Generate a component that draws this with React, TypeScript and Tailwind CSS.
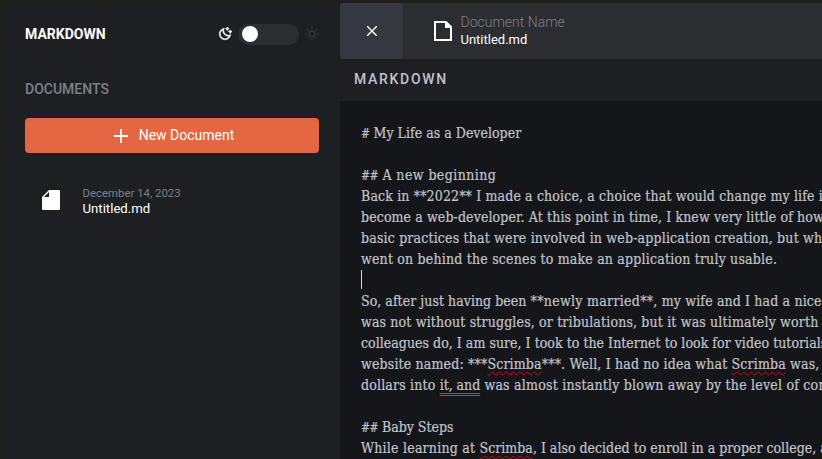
import type { ReactNode } from "react";
import { RiMoonClearLine } from "react-icons/ri";
import { FiSun } from "react-icons/fi";

function Typo({ children }: { children: string }) {
  return (
    <span className="underline decoration-[#c80f0f] decoration-wavy decoration-[1.3px] underline-offset-[2px]">
      {children}
    </span>
  );
}

function Hash({ children }: { children: string }) {
  return <span className="text-[12px] tracking-[-0.55px]">{children}</span>;
}

const lines: { track: string; text: ReactNode }[] = [
  { track: "tracking-[0.02px]", text: <><Hash>#</Hash> My Life as a Developer</> },
  { track: "", text: null },
  { track: "tracking-[0.42px]", text: <><Hash>##</Hash> A new beginning</> },
  { track: "tracking-[0.14px]", text: "Back in **2022** I made a choice, a choice that would change my life i" },
  { track: "tracking-[0.105px]", text: "become a web-developer. At this point in time, I knew very little of how" },
  { track: "tracking-[0.17px]", text: "basic practices that were involved in web-application creation, but wh" },
  { track: "tracking-[0.19px]", text: "went on behind the scenes to make an application truly usable." },
  { track: "", text: <span className="block h-[19px] w-px bg-[#d8dade]" /> },
  {
    track: "tracking-[0.14px]",
    text: (
      <>
        <span className="tracking-[0.04px]">So, after just having been </span>
        <span className="tracking-[0.3px]">**newly married**,</span> my wife and I had a nice
      </>
    ),
  },
  { track: "tracking-[0.153px]", text: "was not without struggles, or tribulations, but it was ultimately worth" },
  { track: "tracking-[0.03px]", text: "colleagues do, I am sure, I took to the Internet to look for video tutorials" },
  {
    track: "tracking-[0.16px]",
    text: <>website named: ***<Typo>Scrimba</Typo>***. Well, I had no idea what <Typo>Scrimba</Typo> was,</>,
  },
  {
    track: "tracking-[0.22px]",
    text: (
      <>
        <span className="tracking-[0.17px]">dollars into </span>
        <span className="tracking-[-0.04px] underline decoration-[#3f5fe8] decoration-double decoration-1 underline-offset-[3px] [text-decoration-skip-ink:none]">
          it, and
        </span>{" "}
        was almost instantly blown away by the level of con
      </>
    ),
  },
  { track: "", text: null },
  { track: "tracking-[-0.02px]", text: <><Hash>##</Hash> Baby Steps</> },
  {
    track: "tracking-[0.005px]",
    text: (
      <>
        <span className="tracking-[0.23px]">While learning at </span>
        <Typo>Scrimba</Typo>, I also decided to enroll in a proper college, a
      </>
    ),
  },
];

export default function App() {
  return (
    <div className="flex h-[459px] w-[822px] overflow-hidden bg-[#1f1f1e] pl-[3px] pt-[3px] font-['Roboto',sans-serif]">
      <aside className="flex w-[337px] shrink-0 flex-col rounded-tl-lg bg-[#1d1f22] pl-[22px] pr-[21px]">
        <div className="mt-5 flex h-[22px] items-center">
          <h1 className="flex-1 text-sm font-bold text-white">MARKDOWN</h1>
          <RiMoonClearLine className="mr-1.5 size-[14px] stroke-white stroke-[0.7] text-white" />
          <div className="flex h-[21px] w-[61px] items-center rounded-full bg-[#2b2d31] px-1">
            <div className="size-4 rounded-full bg-white" />
          </div>
          <FiSun className="ml-1.5 size-[14px] text-[#35393f]" />
        </div>
        <h2 className="mt-[34px] text-sm font-medium text-[#7c8187]">DOCUMENTS</h2>
        <button className="mt-[19px] flex h-[35px] items-center justify-center gap-[11px] rounded bg-[#e46643] pl-1 text-sm text-white">
          <svg viewBox="0 0 14 14" className="size-[14px]" fill="none" stroke="currentColor" strokeWidth="1.8">
            <path d="M7 0v14M0 7h14" />
          </svg>
          <span className="-mt-px">New Document</span>
        </button>
        <div className="mt-[33px] flex items-center gap-[22.500px] pl-[17px]">
          <svg viewBox="0 0 18 20" className="-mt-[2px] h-5 w-[18px]">
            <path fill="#fff" d="M7 0h10q1 0 1 1v18q0 1-1 1H1q-1 0-1-1V7z" />
            <path fill="#1d1f22" d="M7 2v5H2z" />
          </svg>
          <div className="flex flex-col">
            <span className="text-[11.4px] leading-[15px] text-[#7c8187]">December 14, 2023</span>
            <span className="text-[13.2px] leading-[15px] text-white">Untitled.md</span>
          </div>
        </div>
      </aside>
      <main className="flex min-w-0 flex-1 flex-col">
        <header className="flex h-14 shrink-0 items-center bg-[#2b2d31]">
          <button className="flex h-14 w-[63px] items-center justify-center rounded bg-[#35393f] text-white">
            <svg viewBox="0 0 10 10" className="size-[10px]" fill="none" stroke="currentColor" strokeWidth="1.4">
              <path d="M0 0l10 10M10 0L0 10" />
            </svg>
          </button>
          <svg viewBox="0 0 18 20" className="ml-[31px] h-5 w-[18px]">
            <path fill="none" stroke="#fff" strokeWidth="2" d="M1 1h11l5 5v13H1z" />
            <path fill="#fff" d="M11 1h1.500l5.500 5.500V7h-7z" />
          </svg>
          <div className="ml-[8.500px] flex flex-col">
            <span className="text-sm leading-[17px] font-light text-[#7c8187]">Document Name</span>
            <span className="text-[13px] leading-[17px] text-white">Untitled.md</span>
          </div>
        </header>
        <div className="flex h-[42px] shrink-0 items-center bg-[#1d1f22] pb-[2px] pl-[14px]">
          <h2 className="text-sm font-medium tracking-[1.7px] text-[#c1c4cb]">MARKDOWN</h2>
        </div>
        <div className="flex-1 bg-[#151619] pl-[21px] pt-[22px] font-['Roboto_Slab','DejaVu_Serif_Condensed','DejaVu_Serif',serif] text-[14px] leading-[21px] text-[#c1c4cb] [-webkit-text-stroke:0.2px]">
          {lines.map((line, i) => (
            <p key={i} className={`h-[21px] whitespace-nowrap ${line.track}`}>
              {line.text}
            </p>
          ))}
        </div>
      </main>
    </div>
  );
}
